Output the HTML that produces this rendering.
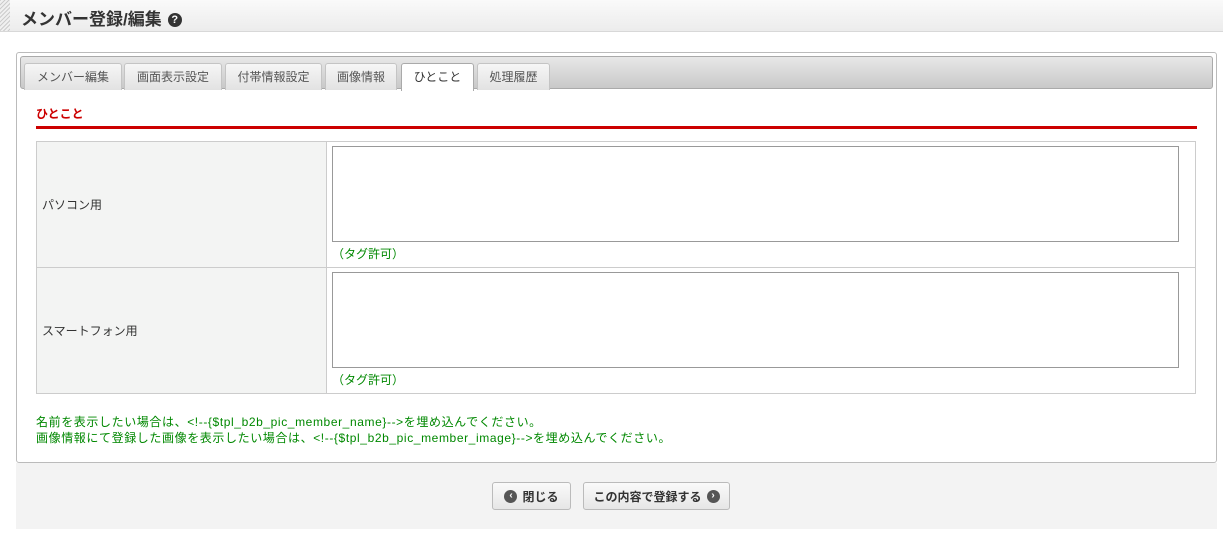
<!DOCTYPE html>
<html><head><meta charset="utf-8"><style>
*{box-sizing:border-box}
body{margin:0;width:1223px;height:541px;background:#fff;font-family:"Liberation Sans","Noto Sans CJK JP",sans-serif;font-size:12px;color:#333;position:relative;overflow:hidden}
.hdr{position:absolute;left:0;top:0;width:1223px;height:32px;background:linear-gradient(#fafafa,#ececec);border-bottom:1px solid #d8d8d8}
.stripe{position:absolute;left:0;top:0;width:10px;height:31px;background:repeating-linear-gradient(135deg,#ccc 0 1px,#f0f0f0 1px 3px)}
.title{position:absolute;left:21px;top:5px;font-size:17px;font-weight:bold;color:#333}
.q{display:inline-block;width:14px;height:14px;border-radius:50%;background:#333;color:#fff;font-size:11px;text-align:center;line-height:14px;vertical-align:2px;margin-left:6px}
.panel{position:absolute;left:16px;top:52px;width:1201px;height:411px;border:1px solid #bbb;border-radius:3px;background:#fff}
.tabbar{position:absolute;left:3px;top:3px;width:1193px;height:33px;background:linear-gradient(#e8e8e8,#c9c9c9);border:1px solid #aaa;border-radius:3px}
.tab{position:absolute;top:6px;height:27px;border:1px solid #c4c4c4;border-bottom:none;border-radius:3px 3px 0 0;background:linear-gradient(#f6f6f6,#e2e2e2);color:#555;font-size:12px;text-align:center;line-height:26px}
.tab.on{background:#fff;color:#333;height:28px;border-color:#aaa}
.sec{position:absolute;left:19px;top:52px;color:#c00;font-size:12px;font-weight:bold}
.line{position:absolute;left:19px;top:73px;width:1161px;height:3px;background:#c00}
table{position:absolute;left:19px;top:88px;width:1160px;border-collapse:collapse}
td{border:1px solid #ccc;padding:0;vertical-align:top}
td.l{width:290px;background:#f3f4f3;padding-left:5px;height:126px;vertical-align:middle}
.ta{width:847px;height:96px;border:1px solid #999;margin:4px 0 0 5px;display:block}
.tag{color:#080;margin:3px 0 0 5px;height:20px}
.note{position:absolute;left:19px;top:361px;color:#080;line-height:16px;font-size:12px;letter-spacing:0.6px}
.foot{position:absolute;left:16px;top:463px;width:1201px;height:66px;background:#f3f3f3}
.btn{position:absolute;top:19px;height:28px;border:1px solid #bbb;border-radius:3px;background:linear-gradient(#fafafa,#e6e6e6);font-size:12px;font-weight:bold;color:#333;display:flex;align-items:center;justify-content:center;gap:5px}
.ic{display:inline-block;width:13px;height:13px;border-radius:50%;background:#555;color:#fff;font-size:10px;text-align:center;line-height:12px}
</style></head><body>
<div class="hdr"><div class="stripe"></div><div class="title">メンバー登録/編集<span class="q">?</span></div></div>
<div class="panel">
<div class="tabbar">
<div class="tab" style="left:3px;width:98px">メンバー編集</div>
<div class="tab" style="left:103px;width:98px">画面表示設定</div>
<div class="tab" style="left:204px;width:97px">付帯情報設定</div>
<div class="tab" style="left:304px;width:72px">画像情報</div>
<div class="tab on" style="left:380px;width:73px">ひとこと</div>
<div class="tab" style="left:456px;width:73px">処理履歴</div>
</div>
<div class="sec">ひとこと</div><div class="line"></div>
<table>
<tr><td class="l">パソコン用</td><td><div class="ta"></div><div class="tag">（タグ許可）</div></td></tr>
<tr><td class="l">スマートフォン用</td><td><div class="ta"></div><div class="tag">（タグ許可）</div></td></tr>
</table>
<div class="note">名前を表示したい場合は、&lt;!--{$tpl_b2b_pic_member_name}--&gt;を埋め込んでください。<br>画像情報にて登録した画像を表示したい場合は、&lt;!--{$tpl_b2b_pic_member_image}--&gt;を埋め込んでください。</div>
</div>
<div class="foot">
<div class="btn" style="left:476px;width:79px"><span class="ic">‹</span>閉じる</div>
<div class="btn" style="left:567px;width:147px">この内容で登録する<span class="ic">›</span></div>
</div>
</body></html>
